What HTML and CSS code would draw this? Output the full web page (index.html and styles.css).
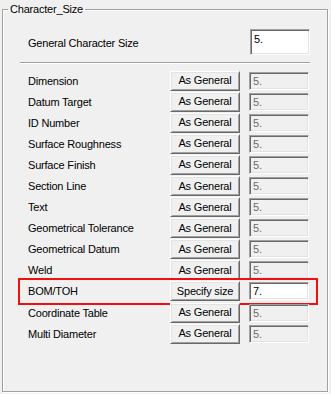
FILE: index.html
```html
<!DOCTYPE html>
<html lang="en">

<head>
    <meta charset="UTF-8">
    <title>Character_Size</title>
    <link rel="stylesheet" href="styles.css">
</head>

<body>

    <div class="panel">
        <fieldset class="group">
            <legend>Character_Size</legend>
            <div class="content">

                <div class="general-row">
                    <span class="label">General Character Size</span>
                    <input type="text" class="field big" value="5." />
                </div>

                <div class="separator"></div>

                <div class="rows" id="rows"></div>

            </div>
        </fieldset>
    </div>

    <script>
        const rows = document.querySelector('#rows');

        let items = [
            { name: "Dimension", mode: "As General", size: "5." },
            { name: "Datum Target", mode: "As General", size: "5." },
            { name: "ID Number", mode: "As General", size: "5." },
            { name: "Surface Roughness", mode: "As General", size: "5." },
            { name: "Surface Finish", mode: "As General", size: "5." },
            { name: "Section Line", mode: "As General", size: "5." },
            { name: "Text", mode: "As General", size: "5." },
            { name: "Geometrical Tolerance", mode: "As General", size: "5." },
            { name: "Geometrical Datum", mode: "As General", size: "5." },
            { name: "Weld", mode: "As General", size: "5." },
            { name: "BOM/TOH", mode: "Specify size", size: "7.", marked: true },
            { name: "Coordinate Table", mode: "As General", size: "5." },
            { name: "Multi Diameter", mode: "As General", size: "5." }
        ];

        for (let i = 0; i < items.length; i++) {
            let custom = items[i].mode != "As General";
            rows.innerHTML += `
                <div class="row">
                    <span class="label">${items[i].name}</span>
                    <button>${items[i].mode}</button>
                    <input type="text" class="field" value="${items[i].size}" ${custom ? '' : 'disabled'} />
                    ${items[i].marked ? '<div class="highlight"></div>' : ''}
                </div>
            `;
        }
    </script>

</body>

</html>
```

FILE: styles.css
```css
body {
    margin: 0;
    background: #f0f0f0;
    font-family: "Liberation Sans", Arial, sans-serif;
    font-size: 11px;
    letter-spacing: -0.2px;
    color: #000;
}

.panel {
    height: 394px;
    box-sizing: border-box;
    padding: 2px 2px 2px 2px;
    display: flex;
    flex-direction: column;
}

.group {
    flex: 1;
    margin: 0;
    padding: 0;
    width: 326px;
    box-sizing: border-box;
    border: 1px solid #a0a0a0;
    box-shadow: inset 1px 1px 0 #fff, 1px 1px 0 #fff;
}

.group legend {
    margin-left: 5px;
    padding: 0 2px;
    line-height: 14px;
}

.content {
    padding: 13px 17px 0 17px;
}

.general-row {
    display: flex;
    align-items: center;
    height: 26px;
}

.label {
    padding-left: 8px;
    white-space: nowrap;
}

.general-row .label {
    padding-top: 2px;
}

.field {
    box-sizing: border-box;
    width: 60px;
    height: 18px;
    margin: 0;
    padding: 0 0 0 3px;
    font-family: inherit;
    font-size: 11px;
    letter-spacing: -0.2px;
    color: #000;
    background: #fff;
    border: 1px solid;
    border-color: #a0a0a0 #fff #fff #a0a0a0;
    box-shadow: inset 1px 1px 0 #696969, inset -1px -1px 0 #e3e3e3;
    outline: none;
}

.field.big {
    height: 26px;
    margin-left: auto;
    padding-top: 0;
    padding-bottom: 7px;
}

.field:disabled {
    background: #f0f0f0;
    color: #6d6d6d;
}

.separator {
    margin-top: 7px;
    height: 1px;
    background: #a0a0a0;
    border-bottom: 1px solid #fff;
}

.rows {
    margin-top: 6px;
}

.row {
    position: relative;
    display: flex;
    align-items: center;
    height: 21.1px;
}

.row .label {
    flex: 0 0 150px;
    box-sizing: border-box;
}

.row button {
    box-sizing: border-box;
    width: 70px;
    height: 20px;
    margin: 0 9px 0 0;
    padding: 0 0 1px 0;
    font-family: inherit;
    font-size: 11px;
    letter-spacing: -0.2px;
    color: #000;
    background: #f0f0f0;
    border: 1px solid;
    border-color: #fff #696969 #696969 #fff;
    box-shadow: inset 1px 1px 0 #e3e3e3, inset -1px -1px 0 #a0a0a0;
}

.highlight {
    position: absolute;
    top: -3px;
    bottom: -3px;
    left: -2px;
    right: -8px;
    border: 2px solid #f01010;
    pointer-events: none;
}
```
